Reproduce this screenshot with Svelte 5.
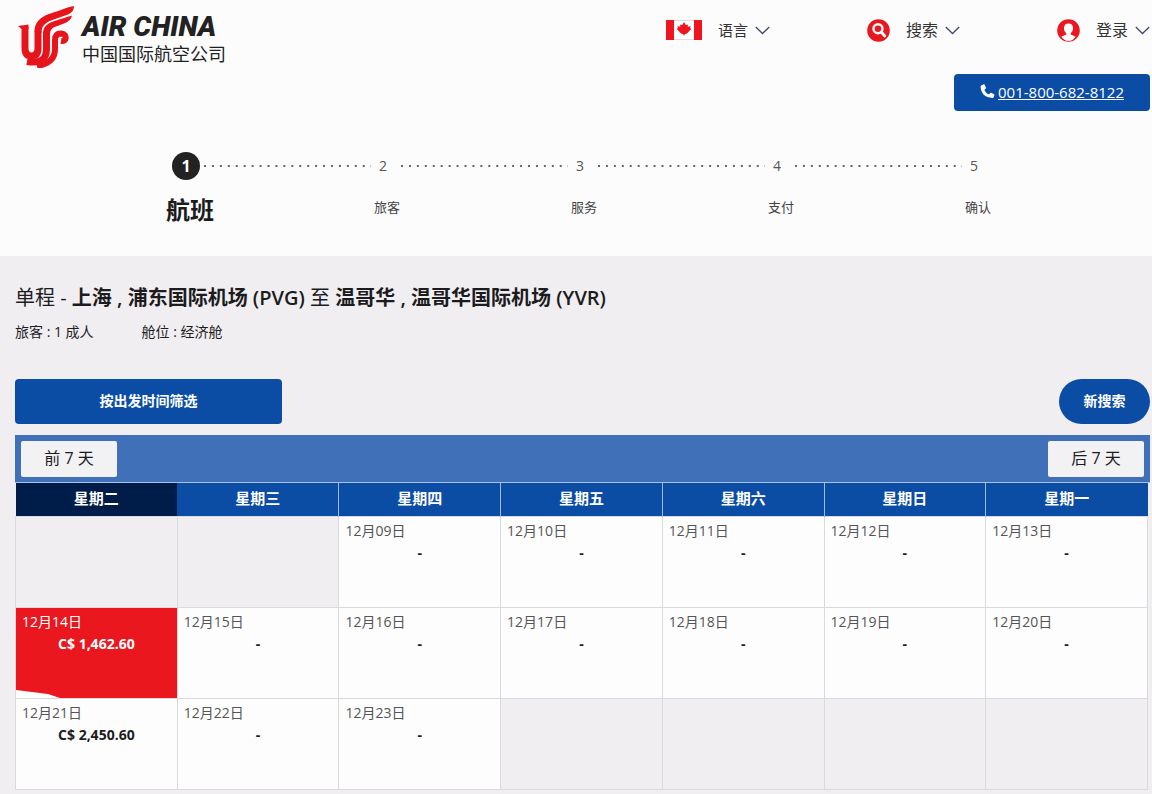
<script>
  const menus = [
    { icon: 'flag', label: '语言' },
    { icon: 'search', label: '搜索' },
    { icon: 'user', label: '登录' }
  ];
  const steps = ['航班', '旅客', '服务', '支付', '确认'];
  const days = ['星期二', '星期三', '星期四', '星期五', '星期六', '星期日', '星期一'];
  const weeks = [
    [null, null, { d: '09' }, { d: '10' }, { d: '11' }, { d: '12' }, { d: '13' }],
    [{ d: '14', price: 'C$ 1,462.60', selected: true }, { d: '15' }, { d: '16' }, { d: '17' }, { d: '18' }, { d: '19' }, { d: '20' }],
    [{ d: '21', price: 'C$ 2,450.60' }, { d: '22' }, { d: '23' }, null, null, null, null]
  ];
</script>

<header>
  <div class="top">
    <a class="brand" href="#home">
      <svg class="phoenix" viewBox="0 0 58 62" aria-hidden="true">
        <g fill="none" stroke="#e8141c" stroke-width="7">
          <path d="M7 21V42Q7 50 13.500 50 20 50 20 42V25" />
          <path d="M9 55.500Q28.500 59 28.500 43V26" />
          <path d="M19 60Q37 57 37 43V34Q37 27.500 43 27.500 48.500 28 47.500 33 46.500 35.500 43 35" stroke-width="6" />
        </g>
        <g fill="#e8141c">
          <path d="M16.500 26C16.500 13 27 9 37 6 46 3 50 1 56 0 56 4 54 7 50 8.500L37 13C28 16 23.500 19 23.500 27z" />
          <path d="M25 28C25 20 30 17 38 14.500L54 9.500Q53 15 46 17.500L38 20.500Q32 22 32 28z" />
          <path d="M0 20 10.500 18.500V23H3.500z" />
        </g>
      </svg>
      <span class="names">
        <span class="en">AIR CHINA</span>
        <span class="zh">中国国际航空公司</span>
      </span>
    </a>
    <nav>
      {#each menus as menu}
        <button class="menu {menu.icon}" type="button">
          {#if menu.icon === 'flag'}
            <svg width="36" height="20" viewBox="0 0 36 20" aria-hidden="true">
              <path fill="#fff" stroke="#ddd" d="M.5.5h35v19H.5z" />
              <path fill="#ee1520" d="M0 0h8v20H0zM28 0h8v20h-8z" />
              <path fill="#ee1520" d="m18 2 1.800 3 2-.6v2.400l2.800-.6-.4 2 1 .8-4.200 4.600-2.400.6v1.300h-1.200v-1.300l-2.400-.6-4.200-4.600 1-.8-.4-2 2.800.6V4.400l2 .6z" />
            </svg>
          {:else if menu.icon === 'search'}
            <svg width="23" height="23" viewBox="0 0 23 23" aria-hidden="true">
              <circle cx="11.500" cy="11.500" r="11.300" fill="#e91720" />
              <circle cx="11" cy="9.700" r="4.500" fill="none" stroke="#fff" stroke-width="2.400" />
              <path d="m14.200 13 3.600 4" stroke="#fff" stroke-width="2.800" stroke-linecap="round" />
            </svg>
          {:else}
            <svg width="23" height="23" viewBox="0 0 23 23" aria-hidden="true">
              <circle cx="11.500" cy="11.500" r="11.300" fill="#e91720" />
              <path fill="#fff" d="M11.500 4.500c3 0 4.500 2 4.500 4.700 0 2.200-.9 4-2.300 5v1.300l5 2.300q-3 4.200-7.200 4.200t-7.200-4.200l5-2.300v-1.300C7.900 13.200 7 11.400 7 9.200c0-2.700 1.500-4.700 4.500-4.700z" />
            </svg>
          {/if}
          <span>{menu.label}</span>
          <svg class="chevron" width="15" height="9" viewBox="0 0 15 9" aria-hidden="true">
            <path d="m.8 1 6.700 6.500L14.200 1" fill="none" stroke="#3f4a70" stroke-width="1.300" />
          </svg>
        </button>
      {/each}
    </nav>
  </div>
  <a class="phone" href="tel:001-800-682-8122">
    <svg width="15" height="15" viewBox="0 0 15 15" aria-hidden="true">
      <path fill="#fff" d="M1.200 1.600 3.800.3Q4.400.1 4.700.7L6 3.700q.2.600-.3 1L4.300 5.900q1.400 3 4.500 4.600l1.300-1.500q.4-.4 1-.2l3 1.400q.6.300.4.900l-1 2.300q-.3.700-1 .6Q1 13.200.6 2.600q0-.7.600-1z" />
    </svg>
    <span>001-800-682-8122</span>
  </a>
  <ol class="steps">
    {#each steps as step, i}
      <li class:current={i === 0}>
        <span class="num">{i + 1}</span>
        {#if i < steps.length - 1}<span class="dots"></span>{/if}
        <span class="label">{step}</span>
      </li>
    {/each}
  </ol>
</header>

<main>
  <h1>单程 - <b>上海 , 浦东国际机场 (PVG)</b> 至 <b>温哥华 , 温哥华国际机场 (YVR)</b></h1>
  <p class="info"><span>旅客 : 1 成人</span><span>舱位 : 经济舱</span></p>
  <div class="actions">
    <button class="filter" type="button">按出发时间筛选</button>
    <button class="again" type="button">新搜索</button>
  </div>
  <div class="pager">
    <button type="button">前 7 天</button>
    <button type="button">后 7 天</button>
  </div>
  <div class="calendar">
    <table>
      <thead>
        <tr>{#each days as day, i}<th scope="col" class:active={i === 0}>{day}</th>{/each}</tr>
      </thead>
      <tbody>
        {#each weeks as week}
          <tr>
            {#each week as cell}
              {#if cell}
                <td class="open" class:selected={cell.selected}>
                  <div class="date">12月{cell.d}日</div>
                  <div class="price">{cell.price ?? '-'}</div>
                  {#if cell.selected}
                    <svg class="curl" width="44" height="8" viewBox="0 0 44 8" aria-hidden="true"><path fill="#fff" d="M0 0 32 4 44 8H0z" /></svg>
                  {/if}
                </td>
              {:else}
                <td></td>
              {/if}
            {/each}
          </tr>
        {/each}
      </tbody>
    </table>
  </div>
</main>

<style>
  :global(body) {
    margin: 0;
    background: #f0eef1;
    color: #1c1c1e;
    font-family: "Open Sans", "Noto Sans CJK SC", sans-serif;
  }
  button {
    font: inherit;
    color: inherit;
    border: 0;
    padding: 0;
    cursor: pointer;
  }
  header {
    background: #fcfcfd;
    padding: 6px 2px 28px 18px;
  }
  .top {
    display: flex;
    justify-content: space-between;
    align-items: flex-start;
  }
  .brand {
    display: flex;
    gap: 6px;
    color: #222;
    text-decoration: none;
  }
  .phoenix {
    width: 58px;
    height: 62px;
  }
  .names {
    display: flex;
    flex-direction: column;
    padding-top: 6px;
  }
  .en {
    font: italic 900 28px/30px Roboto, sans-serif;
  }
  .zh {
    font-size: 18px;
    line-height: 24px;
  }
  nav {
    display: flex;
    gap: 97px;
    padding-top: 12px;
  }
  .menu {
    display: flex;
    align-items: center;
    background: none;
    font-size: 16px;
    line-height: 24px;
    color: #333;
  }
  .menu span {
    margin-left: 16px;
  }
  .menu.flag {
    font-size: 15px;
  }
  .chevron {
    margin-left: 7px;
  }
  .phone {
    display: flex;
    align-items: center;
    justify-content: center;
    gap: 3px;
    box-sizing: border-box;
    width: 196px;
    height: 37px;
    margin: 6px 0 0 auto;
    padding-bottom: 2px;
    border-radius: 4px;
    background: #0b4da5;
    color: #fff;
    font-size: 15px;
  }
  .steps {
    display: flex;
    list-style: none;
    margin: 41px 0 0;
    padding: 0 162px 0 154px;
  }
  li {
    flex: 1;
    display: grid;
    grid-template-columns: 28px 1fr;
    grid-template-rows: 28px 36px;
    align-items: center;
    row-gap: 12px;
  }
  li:last-child {
    flex: none;
    width: 28px;
  }
  .num {
    height: 28px;
    border-radius: 50%;
    text-align: center;
    font-size: 14px;
    line-height: 28px;
    color: #555;
  }
  .current .num {
    background: #222;
    color: #fff;
    font-weight: 700;
    font-size: 16px;
  }
  .dots {
    height: 2px;
    margin: 0 -2px 0 4px;
    background: linear-gradient(90deg, #666 2px, transparent 2px) 0 0 / 8px 2px;
    background-repeat: round;
  }
  .label {
    grid-row: 2;
    grid-column: 1 / -1;
    align-self: start;
    width: 48px;
    margin-left: -6px;
    text-align: center;
    white-space: nowrap;
    font-size: 13px;
    line-height: 30px;
    color: #444;
  }
  .current .label {
    font-size: 24px;
    line-height: 36px;
    font-weight: 700;
    color: #1c1c1e;
  }
  main {
    padding: 26px 2px 4px 15px;
  }
  h1 {
    margin: 0;
    font-size: 20px;
    line-height: 32px;
    font-weight: 400;
  }
  b {
    font-weight: 600;
  }
  .info {
    display: flex;
    gap: 48px;
    margin: 7px 0 0;
    font-size: 14px;
    line-height: 22px;
  }
  .actions {
    display: flex;
    justify-content: space-between;
    margin: 36px 0 11px;
    color: #fff;
    font-size: 14px;
    font-weight: 700;
  }
  .actions button {
    height: 45px;
    padding-bottom: 3px;
    background: #0b4da5;
  }
  .filter {
    width: 267px;
    border-radius: 4px;
  }
  .again {
    width: 91px;
    border-radius: 23px;
  }
  .pager {
    display: flex;
    justify-content: space-between;
    padding: 6px 6px 5px;
    background: #3f70b8;
    border-bottom: 1px solid #a9c3e8;
  }
  .pager button {
    width: 96px;
    height: 36px;
    padding-bottom: 4px;
    border-radius: 2px;
    background: #f2f1f4;
    font-size: 16px;
  }
  .calendar {
    padding-right: 2px;
  }
  table {
    width: 100%;
    table-layout: fixed;
    border-collapse: collapse;
  }
  th {
    height: 30px;
    padding: 0 0 3px;
    background: #0b4da5;
    color: #fff;
    font-size: 15px;
    line-height: 24px;
    border-left: 1px solid #9dbbe4;
  }
  th.active {
    background: #001d4a;
  }
  th.active,
  th.active + th {
    border-left: 0;
  }
  td {
    position: relative;
    height: 90px;
    padding: 0;
    vertical-align: top;
    border: 1px solid #dadade;
  }
  td.open {
    background: #fdfdfe;
  }
  td.selected {
    background: #ea171e;
    color: #fff;
  }
  .date {
    padding: 2px 6px 0;
    font-size: 14px;
    line-height: 24px;
    color: #555;
  }
  .price {
    text-align: center;
    font-size: 14px;
    line-height: 20px;
    font-weight: 700;
  }
  .selected .date {
    color: #fff;
  }
  .curl {
    position: absolute;
    left: 0;
    bottom: 0;
  }
</style>
